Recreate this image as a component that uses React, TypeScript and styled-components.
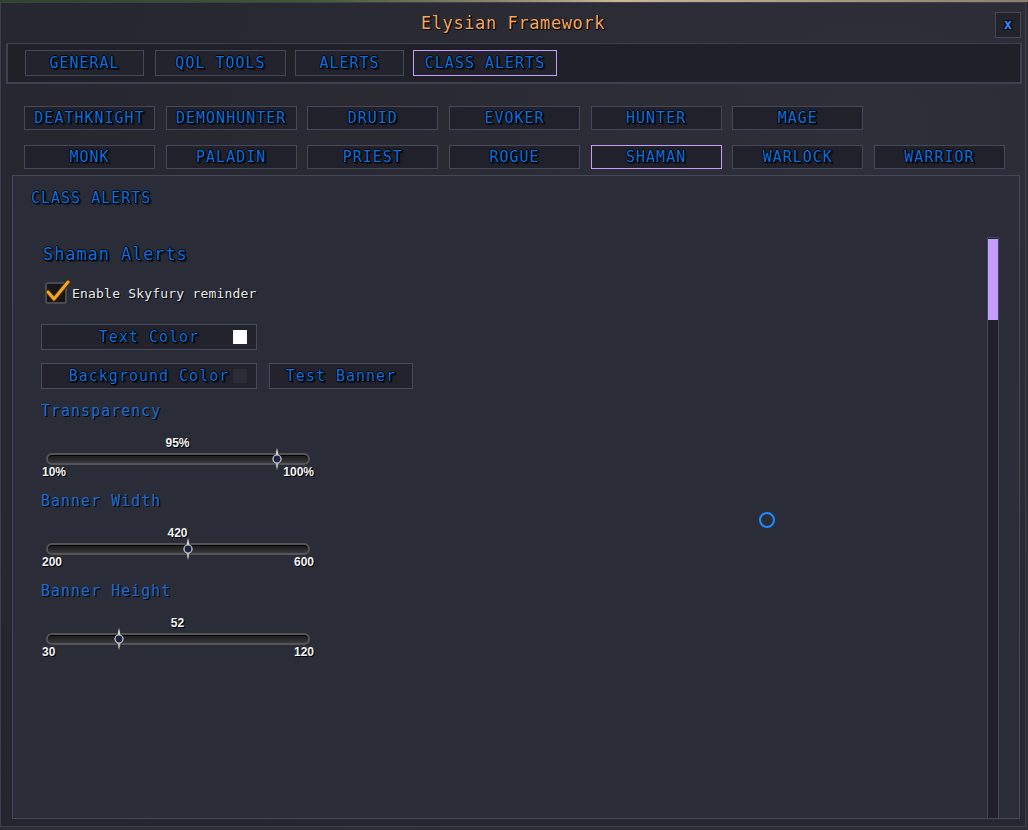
import React from "react";
import styled, { createGlobalStyle } from "styled-components";

const mono = `"DejaVu Sans Mono", "Liberation Mono", monospace`;
const blue = "#0c70de";
const outline = "1px 1px 0 #000, 1px 0 0 #000, 0 1px 0 #000, -1px 0 0 #000c, 0 -1px 0 #000c, 2px 2px 1px #0008";

const GlobalStyle = createGlobalStyle`
   html, body {
      margin: 0;
      padding: 0;
   }
   body {
      width: 1028px;
      height: 830px;
      overflow: hidden;
      background:
         linear-gradient(to right, #2d4426 0%, #3f5a33 30%, #8b8468 48%, #c8b894 60%, #8a806a 100%) top / 100% 2px no-repeat,
         #2c2d35;
      font-family: ${mono};
   }
`;

const topTabs = [
   { name: "GENERAL", width: 119 },
   { name: "QOL TOOLS", width: 131 },
   { name: "ALERTS", width: 109 },
   { name: "CLASS ALERTS", width: 144, active: true },
];

const classes = [
   "DEATHKNIGHT", "DEMONHUNTER", "DRUID", "EVOKER", "HUNTER", "MAGE", "",
   "MONK", "PALADIN", "PRIEST", "ROGUE", "SHAMAN", "WARLOCK", "WARRIOR",
];

type SliderPropsType = {
   label: string
   min: number
   max: number
   value: number
   unit?: string
}

const SliderBlock = (props: SliderPropsType) => {
   const t = (props.value - props.min) / (props.max - props.min);
   const u = props.unit || "";
   return (
      <Section>
         <FieldLabel>{props.label}</FieldLabel>
         <ValueText>{props.value}{u}</ValueText>
         <Track>
            <Thumb style={{ left: 16 + t * 225.5 }}>
               <svg width="12" height="24" viewBox="0 0 12 24">
                  <path d="M6 0 L8 7 L11 12 L8 17 L6 24 L4 17 L1 12 L4 7 Z" fill="#8e8e92" stroke="#2e2e30" strokeWidth="0.8" />
                  <path d="M6 1 L7 7 L6 9 L5 7 Z" fill="#e0e0e4" />
                  <path d="M6 23 L7 17 L6 15 L5 17 Z" fill="#b8b8bc" />
                  <circle cx="6" cy="12" r="4" fill="#1a2340" stroke="#c4c4ca" strokeWidth="1.2" />
               </svg>
            </Thumb>
         </Track>
         <MinMax>
            <span>{props.min}{u}</span>
            <span>{props.max}{u}</span>
         </MinMax>
      </Section>
   );
};

export default function App() {
   return (
      <>
         <GlobalStyle />
         <Window>
            <TitleBar>
               <span />
               <Title>Elysian Framework</Title>
               <CloseButton>x</CloseButton>
            </TitleBar>

            <TabBar>
               {topTabs.map((tab) => (
                  <Tab key={tab.name} $width={tab.width} $active={!!tab.active}>{tab.name}</Tab>
               ))}
            </TabBar>

            <ClassGrid>
               {classes.map((name, index) =>
                  name ? (
                     <ClassButton key={index} $active={name === "SHAMAN"}>{name}</ClassButton>
                  ) : (
                     <span key={index} />
                  )
               )}
            </ClassGrid>

            <Panel>
               <PanelHeader>CLASS ALERTS</PanelHeader>
               <PanelBody>
                  <ScrollContent>
                     <SectionTitle>Shaman Alerts</SectionTitle>

                     <CheckRow>
                        <CheckBox>
                           <svg width="26" height="24" viewBox="0 0 26 24">
                              <path d="M3 12 L9 19 L23 2" fill="none" stroke="#4a2e06" strokeWidth="5" strokeLinecap="round" strokeLinejoin="round" />
                              <path d="M3 12 L9 19 L23 2" fill="none" stroke="#eea528" strokeWidth="3" strokeLinecap="round" strokeLinejoin="round" />
                           </svg>
                        </CheckBox>
                        <CheckLabel>Enable Skyfury reminder</CheckLabel>
                     </CheckRow>

                     <ColorButton>
                        Text Color
                        <Swatch $color="#ffffff" />
                     </ColorButton>

                     <ButtonRow>
                        <ColorButton>
                           Background Color
                           <Swatch $color="#2b2c36" />
                        </ColorButton>
                        <PlainButton>Test Banner</PlainButton>
                     </ButtonRow>

                     <SliderBlock label="Transparency" min={10} max={100} value={95} unit="%" />
                     <SliderBlock label="Banner Width" min={200} max={600} value={420} />
                     <SliderBlock label="Banner Height" min={30} max={120} value={52} />
                  </ScrollContent>
                  <ScrollBar>
                     <ScrollThumb />
                  </ScrollBar>
               </PanelBody>
            </Panel>

            <Cursor>
               <svg width="18" height="18" viewBox="0 0 18 18">
                  <circle cx="9" cy="9" r="7" fill="none" stroke="#1e8cff" strokeWidth="2" />
               </svg>
            </Cursor>
         </Window>
      </>
   );
}

const Window = styled.div`
   position: relative;
   box-sizing: border-box;
   margin-top: 2px;
   width: 1026px;
   height: 825px;
   border: 1px solid #3e4052;
   background: radial-gradient(ellipse at 85% 15%, #2e2f38 0%, #272830 55%, #24252d 100%);
   display: flex;
   flex-direction: column;
`;

const TitleBar = styled.div`
   display: grid;
   grid-template-columns: 1fr auto 1fr;
   align-items: start;
   height: 40px;
`;

const Title = styled.div`
   margin-top: 10px;
   color: #f6a95e;
   font-family: ${mono};
   font-size: 17px;
   letter-spacing: 0.6px;
   line-height: 20px;
   text-shadow: 1px 1px 0 #000, 1px 0 0 #000, 0 1px 0 #000;
`;

const CloseButton = styled.div`
   justify-self: end;
   margin: 9px 4px 0 0;
   box-sizing: border-box;
   width: 26px;
   height: 26px;
   border: 1px solid #45475a;
   background: #22232b;
   color: #2a8cff;
   font-family: ${mono};
   font-weight: bold;
   font-size: 14px;
   line-height: 22px;
   text-align: center;
   text-shadow: 1px 1px 0 #000, -1px -1px 0 #000, 1px -1px 0 #000, -1px 1px 0 #000;
`;

const TabBar = styled.div`
   box-sizing: border-box;
   margin-left: 5px;
   width: 1016px;
   height: 41px;
   border: 2px solid #3f4152;
   border-top-width: 1px;
   background: #1f2028;
   display: flex;
   gap: 9px;
   padding: 6px 0 0 17px;
`;

const Tab = styled.div<{ $width: number; $active: boolean }>`
   box-sizing: border-box;
   width: ${(p) => p.$width}px;
   height: 26px;
   border: 1px solid ${(p) => (p.$active ? "#c59cff" : "#45475a")};
   background: #22232c;
   color: ${blue};
   font-family: ${mono};
   font-size: 15px;
   letter-spacing: 1px;
   line-height: 24px;
   text-align: center;
   text-shadow: ${outline};
   &:first-child {
      margin-right: 2px;
   }
`;

const ClassGrid = styled.div`
   display: grid;
   grid-template-columns: repeat(7, 131px);
   grid-auto-rows: 24px;
   column-gap: 10.67px;
   row-gap: 15px;
   margin: 22px 0 0 23px;
`;

const ClassButton = styled.div<{ $active: boolean }>`
   box-sizing: border-box;
   border: 1px solid ${(p) => (p.$active ? "#c59cff" : "#45475a")};
   background: #20212a;
   color: ${blue};
   font-family: ${mono};
   font-size: 15px;
   letter-spacing: 1px;
   line-height: 22px;
   text-align: center;
   text-shadow: ${outline};
`;

const Panel = styled.div`
   box-sizing: border-box;
   margin: 6px 0 0 11px;
   width: 1008px;
   height: 644px;
   border: 1px solid #45475a;
   background: #2a2c38;
   display: flex;
   flex-direction: column;
`;

const PanelHeader = styled.div`
   padding: 13px 0 0 18px;
   color: ${blue};
   font-family: ${mono};
   font-size: 15px;
   letter-spacing: 1px;
   line-height: 18px;
   text-shadow: ${outline};
`;

const PanelBody = styled.div`
   flex: 1;
   display: flex;
   margin-top: 30px;
`;

const ScrollContent = styled.div`
   flex: 1;
   padding-left: 28px;
   display: flex;
   flex-direction: column;
   align-items: flex-start;
`;

const SectionTitle = styled.div`
   margin: 7px 0 0 2px;
   color: ${blue};
   font-family: ${mono};
   font-size: 17px;
   letter-spacing: 0.9px;
   line-height: 20px;
   text-shadow: ${outline};
`;

const CheckRow = styled.div`
   display: flex;
   align-items: center;
   margin: 18px 0 0 4px;
   gap: 5px;
`;

const CheckBox = styled.div`
   position: relative;
   box-sizing: border-box;
   width: 22px;
   height: 22px;
   border: 2px solid #4a4a4e;
   border-radius: 3px;
   background: #161618;
   & > svg {
      position: absolute;
      left: -2px;
      top: -4px;
   }
`;

const CheckLabel = styled.span`
   color: #e8e8ea;
   font-family: ${mono};
   font-size: 13px;
   letter-spacing: 0.2px;
   text-shadow: 1px 1px 0 #000;
`;

const ButtonBase = styled.div`
   box-sizing: border-box;
   height: 26px;
   border: 1px solid #474a5c;
   background: #22232c;
   color: ${blue};
   font-family: ${mono};
   font-size: 15px;
   letter-spacing: 1px;
   line-height: 24px;
   text-shadow: ${outline};
`;

const ColorButton = styled(ButtonBase)`
   position: relative;
   width: 216px;
   text-align: center;
   margin-top: 20px;
`;

const Swatch = styled.span<{ $color: string }>`
   position: absolute;
   right: 9px;
   top: 5px;
   width: 14px;
   height: 14px;
   background: ${(p) => p.$color};
`;

const ButtonRow = styled.div`
   display: flex;
   gap: 12px;
   margin-top: 13px;
   & > ${ColorButton} {
      margin-top: 0;
   }
`;

const PlainButton = styled(ButtonBase)`
   width: 144px;
   text-align: center;
`;

const Section = styled.div`
   display: flex;
   flex-direction: column;
   margin-top: 12px;
`;

const FieldLabel = styled.div`
   margin-top: 1px;
   color: #1a6cd0;
   font-family: ${mono};
   font-size: 15px;
   letter-spacing: 1px;
   line-height: 18px;
   text-shadow: 1px 1px 0 #000;
`;

const ValueText = styled.div`
   margin-top: 16px;
   width: 273px;
   text-align: center;
   color: #f2f2f2;
   font-family: "Liberation Sans", Arial, sans-serif;
   font-weight: bold;
   font-size: 12px;
   line-height: 14px;
   text-shadow: 1px 1px 0 #000;
`;

const Track = styled.div`
   position: relative;
   box-sizing: border-box;
   margin: 3px 0 0 5px;
   width: 264px;
   height: 12px;
   border: 2px solid #555558;
   border-radius: 6px;
   background: linear-gradient(#19191b 0%, #2a2a2c 60%, #3a3a3c 100%);
   box-shadow: inset 0 1px 0 #000;
`;

const Thumb = styled.div`
   position: absolute;
   top: -8px;
   width: 12px;
   height: 24px;
   margin-left: -6px;
`;

const MinMax = styled.div`
   display: flex;
   justify-content: space-between;
   width: 272px;
   margin-left: 1px;
   color: #f2f2f2;
   font-family: "Liberation Sans", Arial, sans-serif;
   font-weight: bold;
   font-size: 12px;
   line-height: 14px;
   text-shadow: 1px 1px 0 #000;
`;

const ScrollBar = styled.div`
   box-sizing: border-box;
   width: 12px;
   margin-right: 20px;
   border: 1px solid #45475a;
   border-bottom: none;
   background: #1f2029;
   padding-top: 1px;
`;

const ScrollThumb = styled.div`
   height: 81px;
   background: #c39cff;
`;

const Cursor = styled.div`
   position: absolute;
   left: 757px;
   top: 508px;
   width: 18px;
   height: 18px;
`;
